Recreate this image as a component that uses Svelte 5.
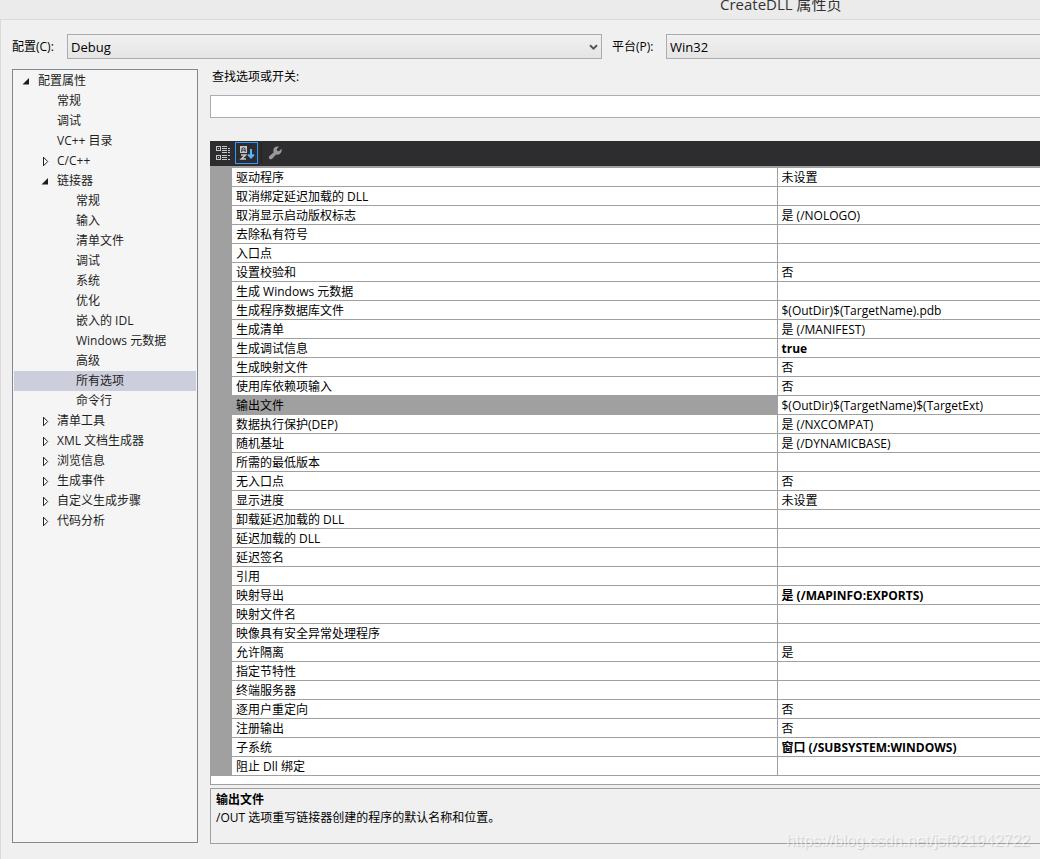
<script lang="ts">
	type Node = {
		label: string;
		level: number;
		state?: 'open' | 'closed';
	};

	type Row = {
		name: string;
		value?: string;
		bold?: boolean;
	};

	const nodes: Node[] = [
		{ label: '配置属性', level: 0, state: 'open' },
		{ label: '常规', level: 1 },
		{ label: '调试', level: 1 },
		{ label: 'VC++ 目录', level: 1 },
		{ label: 'C/C++', level: 1, state: 'closed' },
		{ label: '链接器', level: 1, state: 'open' },
		{ label: '常规', level: 2 },
		{ label: '输入', level: 2 },
		{ label: '清单文件', level: 2 },
		{ label: '调试', level: 2 },
		{ label: '系统', level: 2 },
		{ label: '优化', level: 2 },
		{ label: '嵌入的 IDL', level: 2 },
		{ label: 'Windows 元数据', level: 2 },
		{ label: '高级', level: 2 },
		{ label: '所有选项', level: 2 },
		{ label: '命令行', level: 2 },
		{ label: '清单工具', level: 1, state: 'closed' },
		{ label: 'XML 文档生成器', level: 1, state: 'closed' },
		{ label: '浏览信息', level: 1, state: 'closed' },
		{ label: '生成事件', level: 1, state: 'closed' },
		{ label: '自定义生成步骤', level: 1, state: 'closed' },
		{ label: '代码分析', level: 1, state: 'closed' }
	];

	const rows: Row[] = [
		{ name: '驱动程序', value: '未设置' },
		{ name: '取消绑定延迟加载的 DLL' },
		{ name: '取消显示启动版权标志', value: '是 (/NOLOGO)' },
		{ name: '去除私有符号' },
		{ name: '入口点' },
		{ name: '设置校验和', value: '否' },
		{ name: '生成 Windows 元数据' },
		{ name: '生成程序数据库文件', value: '$(OutDir)$(TargetName).pdb' },
		{ name: '生成清单', value: '是 (/MANIFEST)' },
		{ name: '生成调试信息', value: 'true', bold: true },
		{ name: '生成映射文件', value: '否' },
		{ name: '使用库依赖项输入', value: '否' },
		{ name: '输出文件', value: '$(OutDir)$(TargetName)$(TargetExt)' },
		{ name: '数据执行保护(DEP)', value: '是 (/NXCOMPAT)' },
		{ name: '随机基址', value: '是 (/DYNAMICBASE)' },
		{ name: '所需的最低版本' },
		{ name: '无入口点', value: '否' },
		{ name: '显示进度', value: '未设置' },
		{ name: '卸载延迟加载的 DLL' },
		{ name: '延迟加载的 DLL' },
		{ name: '延迟签名' },
		{ name: '引用' },
		{ name: '映射导出', value: '是 (/MAPINFO:EXPORTS)', bold: true },
		{ name: '映射文件名' },
		{ name: '映像具有安全异常处理程序' },
		{ name: '允许隔离', value: '是' },
		{ name: '指定节特性' },
		{ name: '终端服务器' },
		{ name: '逐用户重定向', value: '否' },
		{ name: '注册输出', value: '否' },
		{ name: '子系统', value: '窗口 (/SUBSYSTEM:WINDOWS)', bold: true },
		{ name: '阻止 Dll 绑定' }
	];

	let config = $state('Debug');
	let platform = $state('Win32');
	let search = $state('');
	let activeNode = $state(15);
	let activeRow = $state(12);
	let sorted = $state(true);
</script>

<header class="title">CreateDLL 属性页</header>

<main class="dialog">
	<div class="config">
		<label class="config-label" for="config">配置(C):</label>
		<div class="combo">
			<select id="config" bind:value={config}>
				<option>Debug</option>
				<option>Release</option>
			</select>
			<svg class="chevron" width="9" height="7" viewBox="0 0 9 7" aria-hidden="true">
				<path d="M1 1.2 4.5 4.7 8 1.2" fill="none" stroke="#555" stroke-width="2" />
			</svg>
		</div>
		<label class="platform-label" for="platform">平台(P):</label>
		<select id="platform" class="cut" bind:value={platform}>
			<option>Win32</option>
			<option>x64</option>
		</select>
	</div>

	<div class="panes">
		<ul class="tree" role="tree">
			{#each nodes as node, i}
				<li role="none">
					<button
						class="node level{node.level}"
						class:active={i === activeNode}
						role="treeitem"
						aria-selected={i === activeNode}
						onclick={() => (activeNode = i)}
					>
						<svg width="8" height="12" viewBox="0 0 8 12" aria-hidden="true">
							{#if node.state === 'open'}
								<path d="M7 3v6.5H.5z" fill="#1e1e1e" />
							{:else if node.state === 'closed'}
								<path d="M2.5 2.2v8.6L6.7 6.5z" fill="#fff" stroke="#1e1e1e" />
							{/if}
						</svg>
						{node.label}
					</button>
				</li>
			{/each}
		</ul>

		<section class="options">
			<label class="search-label" for="search">查找选项或开关:</label>
			<input id="search" class="cut" type="text" bind:value={search} />

			<div class="toolbar">
				<button class:on={!sorted} aria-label="按类别" onclick={() => (sorted = false)}>
					<svg width="16" height="16" viewBox="0 0 16 16" shape-rendering="crispEdges">
						<g fill="none" stroke="#c8c8c8">
							<path d="M1.5 1.5h4v4h-4zM1.5 10.5h4v4h-4zM3 3.5h1M3 12.5h1" />
							<path d="M7 1.5h5M7 3.5h5M7 5.5h5M7 7.5h5M7 10.5h5M7 12.5h5M7 14.5h5" />
							<path d="M13 3.5h2M13 5.5h2M13 7.5h2M13 10.5h2M13 14.5h2" />
						</g>
					</svg>
				</button>
				<button class:on={sorted} aria-label="按字母顺序" onclick={() => (sorted = true)}>
					<svg width="16" height="16" viewBox="0 0 16 16">
						<path d="M1 1h7v7H1z" fill="#c8c8c8" />
						<path d="M2.8 7V4.5a1.7 1.7 0 0 1 3.4 0V7M3 5.2h3" fill="none" stroke="#2d2d30" />
						<path d="M2 10h4.5L2.4 14H7" fill="none" stroke="#c8c8c8" stroke-width="1.6" />
						<path d="M12 4v8.5M9.2 9.5 12 12.5l2.8-3" fill="none" stroke="#55b8ff" stroke-width="2" />
					</svg>
				</button>
				<span class="sep"></span>
				<button aria-label="属性页">
					<svg width="16" height="16" viewBox="0 0 16 16">
						<path
							d="M13.5 3.8 11 6.2 9 5.8 8.8 4 11 1.7C8.2.8 5.4 2.4 5.4 5.2c0 .9.1 1.5.4 2.1L1.5 11c-.8.8-.9 2-.1 2.800s2 .7 2.800-.1l3.900-4.200c3.600 1 6.400-2.300 5.400-5.700z"
							fill="#999"
						/>
					</svg>
				</button>
			</div>

			<div class="grid">
				<table>
					<colgroup>
						<col class="gutter-col" />
						<col class="name-col" />
						<col />
					</colgroup>
					<tbody>
						{#each rows as row, i}
							<tr class:active={i === activeRow} onclick={() => (activeRow = i)}>
								<td class="gutter"></td>
								<th scope="row">{row.name}</th>
								<td class:bold={row.bold}>{row.value ?? ''}</td>
							</tr>
						{/each}
					</tbody>
				</table>
			</div>

			<div class="help">
				<strong>{rows[activeRow].name}</strong>
				<p>/OUT 选项重写链接器创建的程序的默认名称和位置。</p>
			</div>
		</section>
	</div>
</main>

<div class="watermark">https://blog.csdn.net/jsf921942722</div>

<style>
	:global(body) {
		background: #f0f0f0;
		color: #000;
		font-family: 'Open Sans', 'Noto Sans CJK SC', sans-serif;
		font-size: 12px;
		overflow: hidden;
	}

	select,
	input,
	button {
		box-sizing: border-box;
		margin: 0;
		font: inherit;
		color: inherit;
		border-radius: 0;
		outline: none;
	}

	.title {
		height: 19px;
		padding-left: 720px;
		overflow: hidden;
		background: #ebebeb;
		color: #333;
		font-size: 15px;
		line-height: 8px;
		white-space: nowrap;
	}

	.dialog {
		border-top: 1px solid #d9d9d9;
		border-left: 1px solid #d9d9d9;
		padding: 14px 0 15px 11px;
	}

	.config {
		display: flex;
		line-height: 25px;
	}
	.config-label {
		flex: none;
		width: 55px;
	}
	.platform-label {
		flex: none;
		width: 54px;
	}

	.combo {
		position: relative;
		flex: none;
		width: 535px;
		margin-right: 10px;
	}

	select {
		appearance: none;
		display: block;
		width: 100%;
		height: 25px;
		padding: 0 3px 2px;
		border: 1px solid #acacac;
		background: linear-gradient(#f0f0f0, #e5e5e5);
		font-size: 13px;
	}
	#platform {
		flex: 1;
		min-width: 0;
	}

	/* runs on past the right side of the window */
	.cut {
		border-right: 0;
	}

	.chevron {
		position: absolute;
		top: 10px;
		right: 4px;
		pointer-events: none;
	}

	.panes {
		display: flex;
		gap: 12px;
		margin-top: 10px;
	}

	.tree {
		box-sizing: border-box;
		flex: none;
		width: 186px;
		margin: 0 0 1px;
		padding: 1px;
		border: 1px solid #828790;
		background: #f5f5f5;
		color: #1e1e1e;
		list-style: none;
	}

	.node {
		display: flex;
		align-items: center;
		gap: 8px;
		width: 100%;
		height: 20px;
		padding: 0;
		border: 0;
		background: none;
		line-height: 20px;
		white-space: nowrap;
	}
	.node.active {
		background: #cccedb;
	}
	.level0 {
		padding-left: 8px;
	}
	.level1 {
		padding-left: 27px;
	}
	.level2 {
		padding-left: 46px;
	}

	.options {
		display: flex;
		flex: 1;
		flex-direction: column;
		min-width: 0;
	}

	.search-label {
		height: 26px;
		padding-left: 2px;
		line-height: 16px;
	}

	input {
		width: 100%;
		height: 23px;
		padding: 0 4px;
		border: 1px solid #abadb3;
		background: #fff;
	}
	input.cut {
		border-right: 0;
	}

	.toolbar {
		display: flex;
		gap: 1px;
		height: 25px;
		margin-top: 23px;
		padding-left: 2px;
		background: #2d2d30;
	}
	.toolbar button {
		display: flex;
		align-items: center;
		justify-content: center;
		width: 22px;
		height: 22px;
		margin-top: 1px;
		padding: 0;
		border: 1px solid transparent;
		background: none;
	}
	.toolbar button.on {
		width: 23px;
		border-color: #3399ff;
	}
	.sep {
		width: 1px;
		height: 20px;
		margin: 2px;
		background: #222;
	}

	.grid {
		padding-bottom: 8px;
		border: 1px solid #a0a0a0;
		border-width: 2px 0 1px 1px;
		background: #fff;
	}

	table {
		width: 100%;
		border-collapse: collapse;
		table-layout: fixed;
	}
	.gutter-col {
		width: 21px;
	}
	.name-col {
		width: 545px;
	}
	td,
	th {
		height: 16px;
		padding: 2px 4px 0;
		border-bottom: 1px solid #a0a0a0;
		font-weight: normal;
		line-height: 16px;
		text-align: left;
		white-space: nowrap;
	}
	th {
		border-right: 1px solid #a0a0a0;
	}
	.gutter,
	.active th {
		background: #a0a0a0;
	}
	.bold {
		font-weight: bold;
	}

	.help {
		height: 54px;
		margin-top: 3px;
		border: 1px solid #a0a0a0;
		border-right: 0;
		padding-left: 5px;
		line-height: 18px;
	}
	.help strong {
		display: block;
		padding-top: 2px;
	}
	.help p {
		margin: 0;
	}

	.watermark {
		position: absolute;
		right: 10px;
		bottom: 8px;
		color: rgba(255, 255, 255, 0.6);
		font-family: 'Liberation Sans', sans-serif;
		font-size: 16px;
		line-height: 20px;
		text-shadow: 1px 1px 1px rgba(0, 0, 0, 0.15);
		pointer-events: none;
	}
</style>
